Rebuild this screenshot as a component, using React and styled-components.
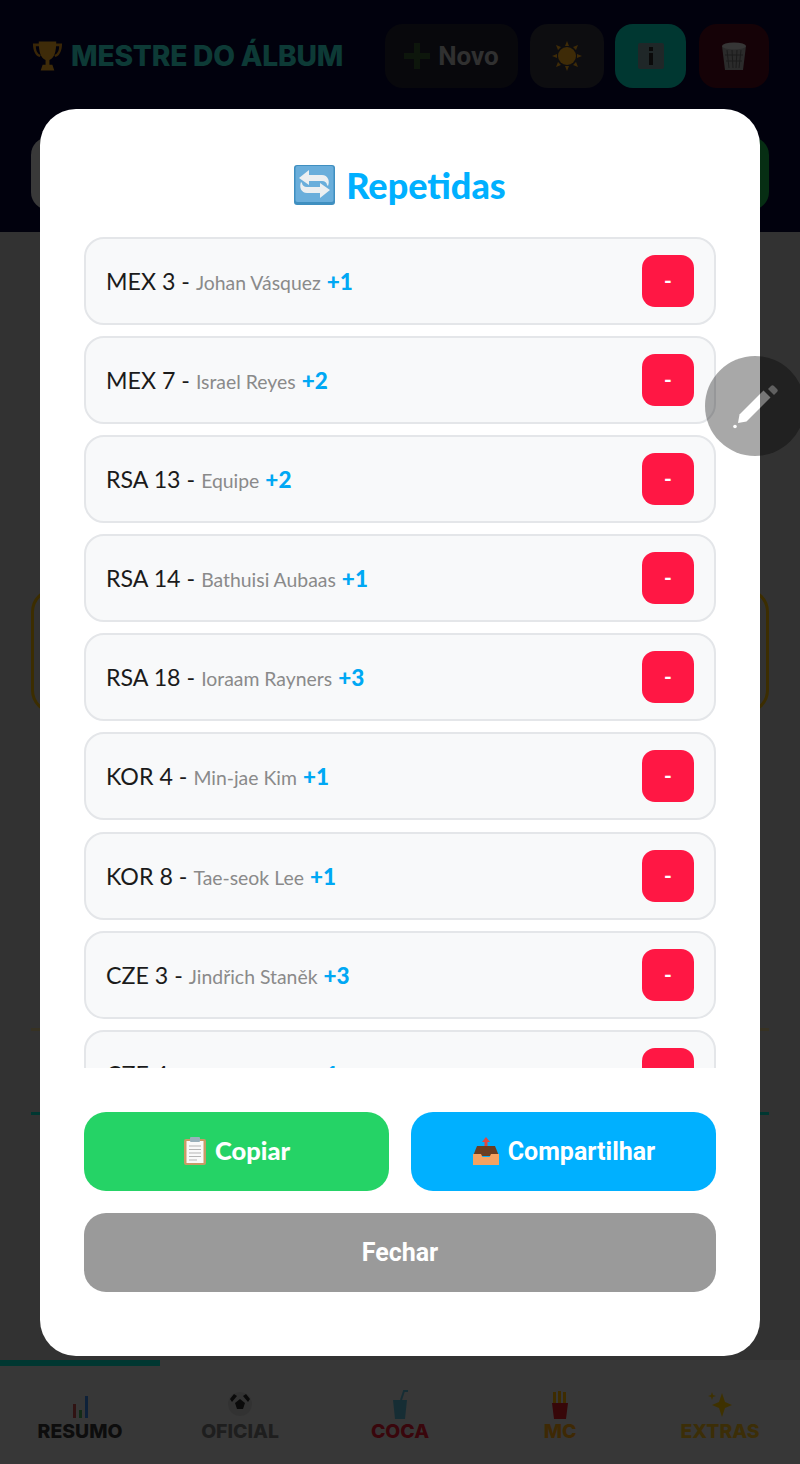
import React from "react";
import styled, { createGlobalStyle } from "styled-components";

const Global = createGlobalStyle`
  * { box-sizing: border-box; }
  html, body { margin: 0; padding: 0; background: #a8a8a8; }
  body { font-family: "Lato", "Liberation Sans", sans-serif; }
`;

const Screen = styled.div`
  position: relative;
  width: 800px;
  height: 1464px;
  overflow: hidden;
  display: flex;
  flex-direction: column;
  background: #a8a8a8;
`;

/* ---------- page behind the dialog ---------- */
const Header = styled.header`
  height: 232px;
  flex: none;
  background: #05052c;
  padding: 24px 31px 0;
  display: flex;
  flex-direction: column;
  gap: 49px;
`;
const TopRow = styled.div`
  display: flex;
  align-items: center;
  height: 64px;
`;
const Brand = styled.div`
  display: flex;
  align-items: center;
  gap: 7px;
  margin-right: auto;
  font-family: "Inter", sans-serif;
  font-weight: 800;
  font-size: 28.2px;
  letter-spacing: -0.2px;
  color: #2cc4b6;
`;
const HeadBtn = styled.div`
  height: 64px;
  width: ${(p) => p.$w}px;
  margin-left: ${(p) => p.$ml}px;
  border-radius: 18px;
  background: ${(p) => p.$bg};
  display: flex;
  align-items: center;
  justify-content: center;
  gap: 8px;
  font-family: "Roboto", sans-serif;
  font-weight: 700;
  font-size: 26px;
  color: #a0a0a0;
`;
const SearchRow = styled.div`
  display: flex;
  justify-content: space-between;
  height: 73px;
`;
const SearchBox = styled.div`
  width: 300px;
  border-radius: 18px;
  background: #c0c0c0;
`;
const SearchBtn = styled.div`
  width: 100px;
  border-radius: 18px;
  background: #149a42;
`;
const Main = styled.main`
  flex: 1;
  padding: 356px 31px 0;
`;
const GoldCard = styled.div`
  height: 126px;
  border: 3px solid #c89600;
  border-radius: 24px;
`;
const GoldRule = styled.div`
  margin-top: 314px;
  height: 3px;
  background: #d9a400;
  opacity: 0.3;
`;
const TealRule = styled.div`
  margin-top: 81px;
  height: 3px;
  background: #00b8a6;
`;
const BottomNav = styled.nav`
  position: relative;
  height: 104px;
  flex: none;
  background: #b8b8b8;
  display: grid;
  grid-template-columns: repeat(5, 160px);
`;
const NavItem = styled.div`
  height: 104px;
  display: flex;
  flex-direction: column;
  align-items: center;
  padding-top: 32px;
  font-family: "Inter", sans-serif;
  font-weight: 800;
  font-size: 19.4px;
  line-height: 22px;
  color: ${(p) => p.$c};
  border-top: 6px solid ${(p) => (p.$active ? "#00b8a6" : "transparent")};
`;
const NavIcon = styled.svg`
  width: 26px;
  height: 30px;
  margin-top: -8px;
  flex: none;
`;

/* ---------- scrim & dialog ---------- */
const Scrim = styled.div`
  position: absolute;
  inset: 0;
  background: rgba(0, 0, 0, 0.7);
  display: flex;
  align-items: center;
  justify-content: center;
`;
const Modal = styled.section`
  width: 720px;
  background: #fff;
  border-radius: 36px;
  padding: 52px 44px 64px;
  display: flex;
  flex-direction: column;
`;
const Title = styled.h2`
  margin: 0 0 28px;
  height: 48px;
  display: flex;
  align-items: center;
  justify-content: center;
  gap: 11px;
  font-family: "Lato", sans-serif;
  font-weight: 900;
  font-size: 36px;
  line-height: 46px;
  color: #00b0ff;
`;
const List = styled.div`
  height: 831px;
  overflow: hidden;
  display: flex;
  flex-direction: column;
  gap: 11.2px;
`;
const Row = styled.div`
  flex: none;
  height: 88px;
  border: 2px solid #e4e6e9;
  border-radius: 20px;
  background: #f8f9fa;
  padding: 0 20px;
  display: flex;
  align-items: center;
  justify-content: space-between;
`;
const RowText = styled.div`
  display: flex;
  align-items: baseline;
  white-space: nowrap;
`;
const Code = styled.span`
  font-size: 23.2px;
  font-weight: 400;
  color: #1b1b1b;
`;
const Player = styled.span`
  font-size: 19.4px;
  color: #8a8a8a;
  margin-left: 6px;
`;
const Count = styled.span`
  font-size: 22.5px;
  font-weight: 900;
  color: #00a8f4;
  margin-left: 6px;
`;
const MinusBtn = styled.button`
  width: 52px;
  height: 52px;
  border: 0;
  border-radius: 13px;
  background: #ff1744;
  color: #fff;
  font-family: "Roboto", sans-serif;
  font-weight: 700;
  font-size: 20px;
  padding: 0;
`;
const Actions = styled.div`
  margin-top: 44px;
  display: grid;
  grid-template-columns: 1fr 1fr;
  gap: 22px;
`;
const ActionBtn = styled.button`
  grid-column: ${(p) => (p.$wide ? "1 / -1" : "auto")};
  height: 79px;
  border: 0;
  border-radius: 22px;
  background: ${(p) => p.$bg};
  color: #fff;
  font-family: "Roboto", sans-serif;
  font-weight: 700;
  font-size: 25px;
  display: flex;
  align-items: center;
  justify-content: center;
  gap: 8px;
`;
const CopyLabel = styled.span`
  font-family: "Lato", sans-serif;
  font-weight: 900;
  font-size: 25.5px;
  margin-top: -2px;
`;
const Fab = styled.div`
  position: absolute;
  left: 705px;
  top: 356px;
  width: 100px;
  height: 100px;
  border-radius: 50%;
  background: rgba(0, 0, 0, 0.34);
`;
const FabIcon = styled.svg`
  display: block;
  width: 100px;
  height: 100px;
`;

/* ---------- drawn emoji ---------- */
const Trophy = () => (
  <svg width="33" height="34" viewBox="0 0 34 34">
    <path d="M2 4h7v3H5c0 5 2 8 5 9l-1 2c-4-1-7-6-7-14zM32 4h-7v3h4c0 5-2 8-5 9l1 2c4-1 7-6 7-14z" fill="#c08018" />
    <path d="M8 2h18c0 11-2 17-7 19v5h3l2 6H10l2-6h3v-5C10 19 8 13 8 2z" fill="#d09220" />
  </svg>
);
const Plus = () => (
  <svg width="26" height="26" viewBox="0 0 26 26">
    <path d="M10 0h6v10h10v6H16v10h-6V16H0v-6h10z" fill="#2c4c28" />
  </svg>
);
const Sun = () => (
  <svg width="30" height="30" viewBox="0 0 30 30">
    <circle cx="15" cy="15" r="9" fill="#d09018" />
    <path d="M15 0l2 5h-4zM15 30l-2-5h4zM0 15l5-2v4zM30 15l-5 2v-4zM4 4l5 2-3 3zM26 26l-5-2 3-3zM26 4l-2 5-3-3zM4 26l2-5 3 3z" fill="#d09018" />
  </svg>
);
const Info = () => (
  <svg width="26" height="26" viewBox="0 0 26 26">
    <rect width="26" height="26" rx="2" fill="#6a8288" />
    <rect x="11" y="4" width="4" height="4" fill="#222" />
    <rect x="11" y="10" width="4" height="12" fill="#222" />
  </svg>
);
const Trash = () => (
  <svg width="26" height="30" viewBox="0 0 26 30">
    <path d="M1 5h24l-3 24H4z" fill="#8f8f8f" />
    <ellipse cx="13" cy="5" rx="12" ry="3.5" fill="#b5b5b5" />
    <path d="M6 9l2 18M11 9l1 18M16 9l-1 18M20 9l-2 18M4 14h18M5 20h16" stroke="#5c5c5c" strokeWidth="1" />
  </svg>
);
const RepeatEmoji = () => (
  <svg width="41" height="40" viewBox="0 0 41 40">
    <rect width="41" height="40" rx="3" fill="#3f8fc0" />
    <rect x="1.5" y="1" width="38" height="36" rx="2" fill="#6aaedb" />
    <path d="M15 5L5 13l10 7v-4h13c3 0 5 2 5 4l1 1c2-5 0-11-6-11H15z" fill="#eceff1" />
    <path d="M26 33l10-8-10-7v4H13c-3 0-5-2-5-4l-1-1c-2 5 0 11 6 11h13z" fill="#eceff1" />
  </svg>
);
const Clipboard = () => (
  <svg width="24" height="28" viewBox="0 0 24 28">
    <rect x="1" y="2" width="22" height="26" rx="2" fill="#c99a66" />
    <rect x="3.5" y="4" width="17" height="22" fill="#fafafa" />
    <rect x="7" y="0" width="10" height="5" rx="1" fill="#9ab0bb" />
    <path d="M6 9h12M6 12.5h12M6 16h12M6 19.5h12M6 23h8" stroke="#b5b5b5" strokeWidth="1" />
  </svg>
);
const Outbox = () => (
  <svg width="28" height="28" viewBox="0 0 28 28">
    <path d="M14 0l4 5h-2.5v6h-3V5H10z" fill="#e2473f" />
    <path d="M5 9h18l4 10H1z" fill="#6b3e22" />
    <path d="M1 17h8l1.5 3h7l1.5-3h8v11H1z" fill="#f4a261" />
  </svg>
);
const Pencil = () => (
  <FabIcon viewBox="0 0 100 100">
    <defs>
      <linearGradient id="pencilFill" gradientUnits="userSpaceOnUse" x1="0" y1="0" x2="100" y2="0">
        <stop offset="0.55" stopColor="#ffffff" />
        <stop offset="0.55" stopColor="#777777" />
      </linearGradient>
    </defs>
    <circle cx="30" cy="70.5" r="1.8" fill="#fff" />
    <path d="M33 67l1.5-8.5 24-24 7 7-24 24z" fill="url(#pencilFill)" />
    <path d="M63 33l3-3c1-1 2-1 3 0l3 3c1 1 1 2 0 3l-3 3z" fill="#606060" />
  </FabIcon>
);

const rows = [
  ["MEX 3", "Johan Vásquez", "+1"],
  ["MEX 7", "Israel Reyes", "+2"],
  ["RSA 13", "Equipe", "+2"],
  ["RSA 14", "Bathuisi Aubaas", "+1"],
  ["RSA 18", "Ioraam Rayners", "+3"],
  ["KOR 4", "Min-jae Kim", "+1"],
  ["KOR 8", "Tae-seok Lee", "+1"],
  ["CZE 3", "Jindřich Staněk", "+3"],
  ["CZE 4", "David Jurásek", "+1"],
];

const tabs = [
  { label: "RESUMO", color: "#2e2e2e", active: true, icon: <><rect x="6" y="14" width="3" height="14" fill="#a04040" /><rect x="12" y="20" width="3" height="8" fill="#3d8f4a" /><rect x="18" y="6" width="3" height="22" fill="#2f6fc0" /></> },
  { label: "OFICIAL", color: "#666666", icon: <><circle cx="13" cy="14" r="12" fill="#a8a8a8" /><path d="M13 9l5 4-2 6h-6l-2-6zM3 9l4-5 3 2-5 6zM23 9l-4-5-3 2 5 6z" fill="#222" /></> },
  { label: "COCA", color: "#c01428", icon: <><path d="M6 10h14l-2 19H8z" fill="#4a98b0" /><path d="M14 10l3-9h4" stroke="#4a98b0" strokeWidth="2" fill="none" /></> },
  { label: "MC", color: "#d08a10", icon: <><path d="M6 2h3v12H6zM11 1h3v13h-3zM16 2h3v12h-3z" fill="#d09400" /><path d="M5 13h16l-2 16H7z" fill="#b81820" /></> },
  { label: "EXTRAS", color: "#c89a18", icon: <path d="M15 3l3 9 7 3-7 3-3 9-3-9-7-3 7-3zM5 2l1 3 3 1-3 1-1 3-1-3-3-1 3-1z" fill="#d0a400" /> },
];

export default function App() {
  return (
    <Screen>
      <Global />
      <Header>
        <TopRow>
          <Brand>
            <Trophy />
            <span>MESTRE DO ÁLBUM</span>
          </Brand>
          <HeadBtn $w={133} $ml={0} $bg="#1c1c2a">
            <Plus />
            Novo
          </HeadBtn>
          <HeadBtn $w={74} $ml={12} $bg="#2c2c38">
            <Sun />
          </HeadBtn>
          <HeadBtn $w={71} $ml={11} $bg="#00b8a6">
            <Info />
          </HeadBtn>
          <HeadBtn $w={70} $ml={13} $bg="#480818">
            <Trash />
          </HeadBtn>
        </TopRow>
        <SearchRow>
          <SearchBox />
          <SearchBtn />
        </SearchRow>
      </Header>
      <Main>
        <GoldCard />
        <GoldRule />
        <TealRule />
      </Main>
      <BottomNav>
        {tabs.map((t) => (
          <NavItem key={t.label} $c={t.color} $active={t.active}>
            <NavIcon viewBox="0 0 26 30">{t.icon}</NavIcon>
            {t.label}
          </NavItem>
        ))}
      </BottomNav>
      <Scrim>
        <Modal>
          <Title>
            <RepeatEmoji />
            Repetidas
          </Title>
          <List>
            {rows.map(([code, name, count]) => (
              <Row key={code}>
                <RowText>
                  <Code>{code} -</Code>
                  <Player>{name}</Player>
                  <Count>{count}</Count>
                </RowText>
                <MinusBtn>-</MinusBtn>
              </Row>
            ))}
          </List>
          <Actions>
            <ActionBtn $bg="#25d366">
              <Clipboard />
              <CopyLabel>Copiar</CopyLabel>
            </ActionBtn>
            <ActionBtn $bg="#00b0ff">
              <Outbox />
              Compartilhar
            </ActionBtn>
            <ActionBtn $wide $bg="#9a9a9a">
              Fechar
            </ActionBtn>
          </Actions>
        </Modal>
      </Scrim>
      <Fab>
        <Pencil />
      </Fab>
    </Screen>
  );
}
